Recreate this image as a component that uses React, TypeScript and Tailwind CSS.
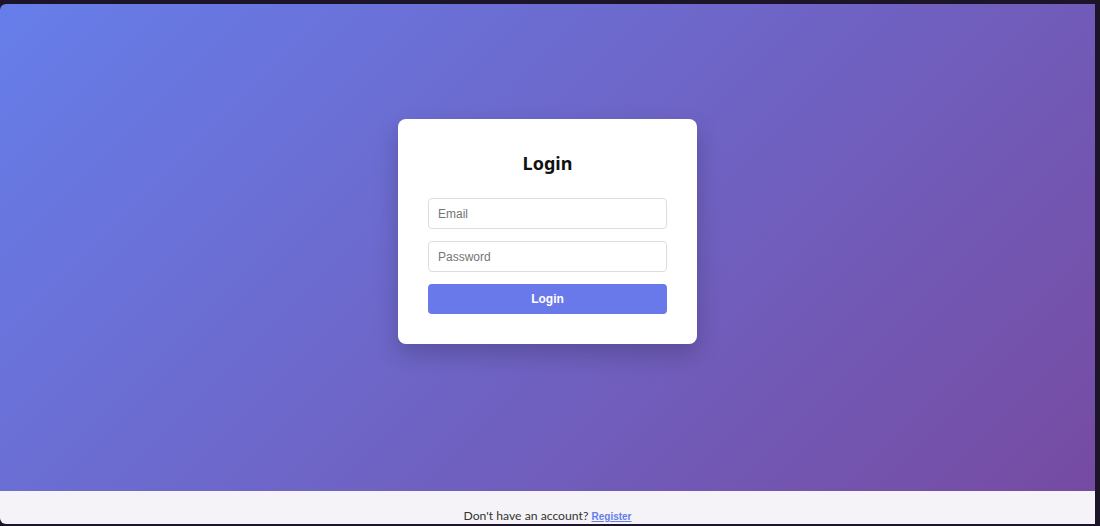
import React from 'react';

export default function App() {
  return (
    <div className="w-[1100px] h-[526px] bg-[#1c1428] pt-[4px] pr-[5px] pb-[2px] overflow-hidden">
      <div className="flex flex-col h-full rounded-tl-[6px] rounded-bl-[6px] overflow-hidden">
        {/* Hero area */}
        <div className="h-[487px] shrink-0 flex justify-center pt-[115px] bg-[linear-gradient(135deg,#667eea_0%,#764ba2_100%)]">
          <div className="w-[299px] h-[225px] bg-white rounded-[8px] p-[30px] shadow-[0_10px_25px_rgba(0,0,0,0.2)] flex flex-col">
            <h2 className="text-center text-[18px] leading-[28px] font-bold text-[#111] font-['Noto_Sans',sans-serif]">
              Login
            </h2>
            <form className="flex flex-col gap-[12px] mt-[21px]" onSubmit={(e) => e.preventDefault()}>
              <input
                type="email"
                placeholder="Email"
                className="h-[31px] w-full border border-[#ddd] rounded-[4px] px-[9px] text-[12px] font-['Liberation_Sans',Arial,sans-serif] placeholder:text-[#757575] outline-none"
              />
              <input
                type="password"
                placeholder="Password"
                className="h-[31px] w-full border border-[#ddd] rounded-[4px] px-[9px] text-[12px] font-['Liberation_Sans',Arial,sans-serif] placeholder:text-[#757575] outline-none"
              />
              <button
                type="submit"
                className="h-[30px] w-full rounded-[4px] bg-[#6a79e9] text-white text-[12px] font-bold font-['Liberation_Sans',Arial,sans-serif]"
              >
                Login
              </button>
            </form>
          </div>
        </div>

        {/* Footer */}
        <div className="flex-1 bg-[#f5f3f8] pt-[16px] text-center">
          <p className="text-[12.2px] leading-[18px] text-[#333] font-['Lato',sans-serif]">
            Don't have an account?{' '}
            <a href="#" className="text-[10px] font-bold underline text-[#667eea] font-['Liberation_Sans',Arial,sans-serif]">
              Register
            </a>
          </p>
        </div>
      </div>
    </div>
  );
}
